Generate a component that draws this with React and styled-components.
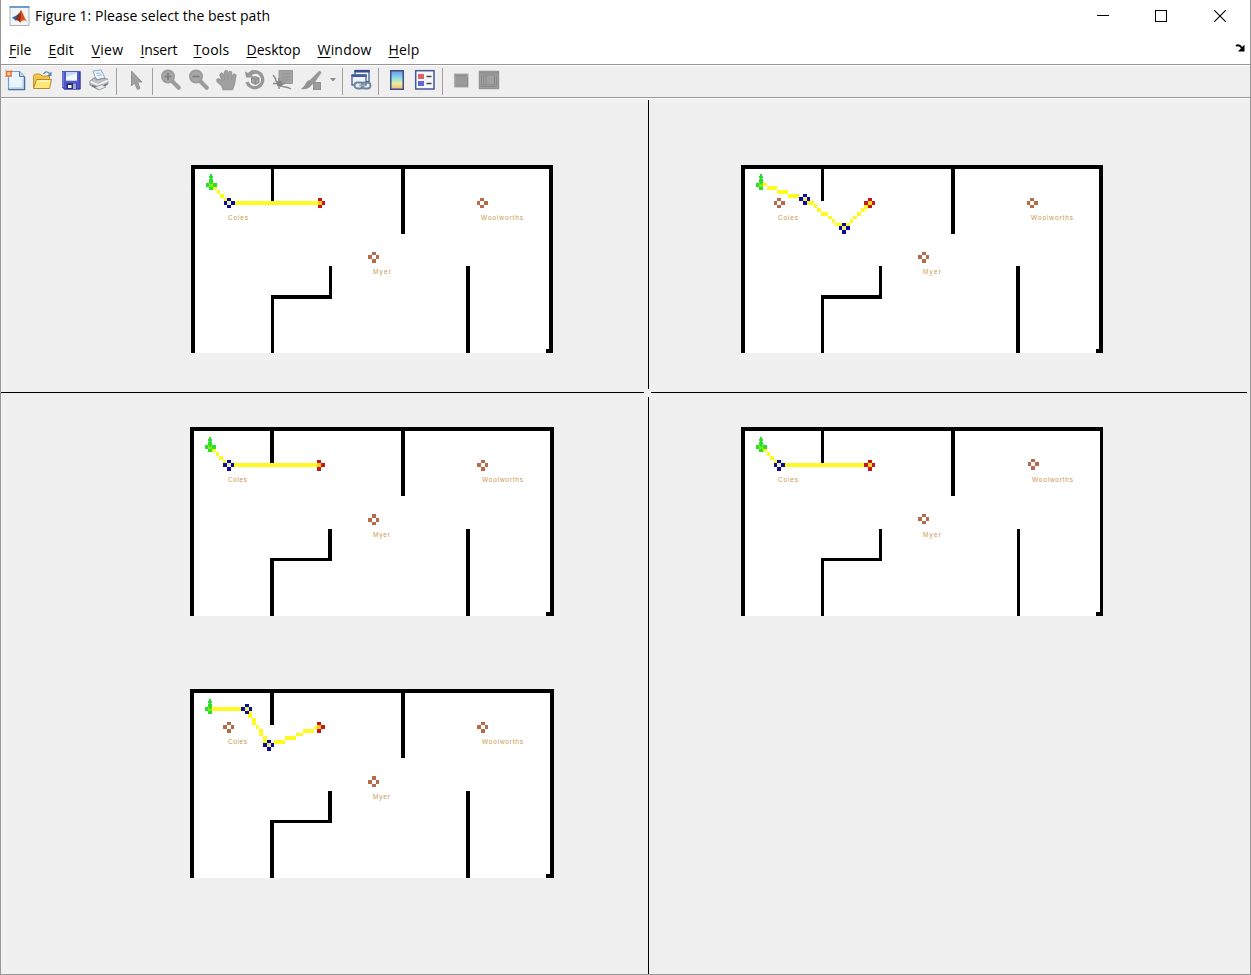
import React from 'react';
import styled, { createGlobalStyle } from 'styled-components';

const Global = createGlobalStyle`
  body { margin: 0; background: #fff; }
  * { box-sizing: border-box; }
`;

const WindowFrame = styled.div`
  width: 1251px;
  height: 975px;
  display: flex;
  flex-direction: column;
  border: 1px solid #979797;
  border-top: 0;
  background: #fff;
  color: #000;
  font-family: 'Open Sans', 'Noto Sans', sans-serif;
`;

const TitleBar = styled.header`
  height: 32px;
  display: flex;
  align-items: center;
  padding: 0 1px 0 8px;
`;

const Title = styled.h1`
  margin: 0 auto 0 5px;
  font-size: 14px;
  line-height: 32px;
  font-weight: 400;
  letter-spacing: 0.05px;
  white-space: nowrap;
`;

const WindowButtons = styled.div`
  display: flex;
  align-items: center;
  height: 30px;
`;

const WindowButton = styled.button`
  width: 58.5px;
  height: 30px;
  padding: 0;
  border: 0;
  background: none;
  display: flex;
  align-items: center;
  justify-content: center;
`;

const MenuBar = styled.nav`
  height: 32px;
  display: flex;
  align-items: center;
  padding: 0 4px 0 8px;
`;

const MenuItem = styled.span`
  width: ${(p) => p.$width}px;
  font-size: 14px;
  line-height: 32px;
  padding-top: 3px;
  letter-spacing: ${(p) => p.$track || 0}px;
  white-space: nowrap;
  &::first-letter {
    text-decoration: underline;
    text-underline-offset: 2px;
  }
`;

const DockButton = styled.span`
  margin-left: auto;
  display: flex;
`;

const ToolBar = styled.div`
  height: 34px;
  display: flex;
  align-items: center;
  background: #efefef;
  border-top: 1px solid #979797;
  border-bottom: 1px solid #979797;
  box-shadow: inset 0 1px #fff, 0 1px #fff;
`;

const Tool = styled.span`
  width: ${(p) => p.$width || 28}px;
  height: 24px;
  padding-bottom: 2px;
  display: flex;
  align-items: center;
  justify-content: center;
`;

const Separator = styled.span`
  width: 1px;
  height: 27px;
  background: #a0a0a0;
  margin: 0 ${(p) => p.$right}px 0 ${(p) => p.$left}px;
`;

const Canvas = styled.main`
  flex: 1;
  margin-top: 1px;
  display: grid;
  grid-template-columns: 647px 1px 1fr;
  grid-template-rows: 293px 1px 1fr;
  background: #f0f0f0;
`;

const Cell = styled.section`
  display: flex;
  flex-direction: column;
  gap: 73px;
  padding: ${(p) => p.$top}px 0 0 ${(p) => p.$left}px;
`;

const VerticalRule = styled.div`
  background: #000;
  margin: ${(p) => p.$top}px 0 ${(p) => p.$bottom}px;
`;

const HorizontalRule = styled.div`
  background: #000;
  margin: 0 ${(p) => p.$right}px 0 ${(p) => p.$left}px;
`;

const MapSvg = styled.svg`
  display: block;
  background: #fff;
  shape-rendering: crispEdges;
`;

const MapLabel = styled.text`
  font-family: 'Liberation Sans', sans-serif;
  font-size: 6.5px;
  fill: #c9994f;
`;

const BLUE = '#0b0b9c';
const RED = '#c81616';
const BROWN = '#b56b49';
const GREEN = '#26e02c';
const YELLOW = '#fffb20';

const Box = ({ b, fill }) => (
  <rect x={b[0]} y={b[1]} width={b[2] - b[0]} height={b[3] - b[1]} fill={fill} />
);

function Marker({ x, y, c = '344', r = '344', color, center, hide = '' }) {
  const [c0, c1, c2] = [...c].map(Number);
  const [r0, r1, r2] = [...r].map(Number);
  return (
    <g fill={color}>
      {center && <rect x={x + c0} y={y + r0} width={c1} height={r1} fill={center} />}
      <rect x={x + c0} y={y} width={c1} height={r0} />
      {!hide.includes('l') && <rect x={x} y={y + r0} width={c0} height={r1} />}
      {!hide.includes('r') && <rect x={x + c0 + c1} y={y + r0} width={c2} height={r1} />}
      <rect x={x + c0} y={y + r0 + r1} width={c1} height={r2} />
    </g>
  );
}

function Start({ x, y, r, hide }) {
  return (
    <g fill={GREEN}>
      <Marker x={x} y={y} r={r} color={GREEN} center="#8fe814" hide={hide} />
      <rect x={x + 4} y={y - 5} width={2} height={10} />
      <rect x={x + 3} y={y - 3} width={4} height={2} />
    </g>
  );
}

function FloorMap({ w, h, walls, path, start, markers, labels }) {
  return (
    <MapSvg width={w} height={h} viewBox={`0 0 ${w} ${h}`}>
      {walls.map((b, i) => <Box key={i} b={b} fill="#000" />)}
      {path.map((b, i) => <Box key={i} b={b} fill={YELLOW} />)}
      {markers.map((m, i) => <Marker key={i} {...m} />)}
      <Start {...start} />
      {labels.map(([t, x, y, len]) => (
        <MapLabel key={t} x={x} y={y + 0.5} textLength={len}>{t}</MapLabel>
      ))}
    </MapSvg>
  );
}

const wallsUpper = [
  [0, 0, 362, 4], [0, 0, 4, 188], [358, 0, 362, 188], [355, 184, 362, 188],
  [80, 0, 83, 36], [210, 0, 214, 69], [138, 101, 141, 134], [80, 130, 141, 134],
  [80, 130, 83, 188], [275, 101, 279, 188],
];
const wallsLower = [
  [0, 0, 364, 4], [0, 0, 4, 189], [360, 0, 364, 189], [356, 185, 364, 189],
  [80, 0, 84, 36], [211, 0, 215, 69], [138, 102, 142, 134], [80, 131, 142, 134],
  [80, 131, 84, 189], [276, 102, 280, 189],
];
const wallsRight = [
  [0, 0, 362, 4], [0, 0, 4, 189], [359, 0, 362, 189], [355, 185, 362, 189],
  [80, 0, 83, 36], [210, 0, 214, 69], [138, 102, 141, 134], [80, 131, 141, 134],
  [80, 131, 83, 189], [276, 102, 279, 189],
];
const diagonal = [[22, 21, 26, 25], [26, 25, 29, 29], [29, 29, 33, 33], [33, 33, 36, 36]];
const upperLabels = [['Coles', 37, 54, 20], ['Myer', 182, 108, 18], ['Woolworths', 290, 54, 42]];
const lowerLabels = [['Coles', 38, 54, 19], ['Myer', 183, 109, 17], ['Woolworths', 292, 54, 41]];
const upperShops = [
  { x: 177, y: 87, c: '443', color: BROWN },
  { x: 286, y: 33, r: '343', color: BROWN },
];
const lowerShops = [
  { x: 178, y: 87, c: '443', r: '443', color: BROWN },
  { x: 287, y: 33, c: '443', color: BROWN },
];

const plots = {
  one: {
    w: 362, h: 188, walls: wallsUpper, labels: upperLabels,
    path: [...diagonal, [44, 36, 130, 40]],
    start: { x: 15, y: 14, r: '443' },
    markers: [
      ...upperShops,
      { x: 33, y: 33, r: '343', color: BLUE, center: '#f2efb0' },
      { x: 123, y: 33, c: '443', r: '343', color: RED, center: '#f7c91c', hide: 'l' },
    ],
  },
  two: {
    w: 362, h: 188, walls: wallsUpper, labels: upperLabels,
    path: [
      [22, 18, 26, 21], [26, 21, 36, 25], [36, 25, 47, 29], [47, 29, 58, 33],
      [66, 36, 73, 40], [73, 39, 76, 43], [76, 43, 80, 47], [80, 47, 87, 51], [87, 51, 91, 54],
      [91, 54, 94, 58], [94, 58, 101, 61], [105, 58, 109, 61], [109, 54, 112, 58],
      [112, 51, 116, 54], [116, 47, 120, 51], [120, 43, 124, 47], [123, 40, 127, 44],
    ],
    start: { x: 15, y: 14, r: '443', hide: 'r' },
    markers: [
      ...upperShops,
      { x: 33, y: 33, r: '343', color: BROWN },
      { x: 58, y: 29, c: '443', color: BLUE, center: '#eeee70' },
      { x: 98, y: 58, color: BLUE, center: '#eeee70' },
      { x: 123, y: 33, c: '443', r: '343', color: RED, center: '#f7dc1c' },
    ],
  },
  three: {
    w: 364, h: 189, walls: wallsLower, labels: lowerLabels,
    path: [...diagonal, [44, 36, 131, 40]],
    start: { x: 15, y: 15, r: '343' },
    markers: [
      ...lowerShops,
      { x: 33, y: 33, c: '443', color: BLUE, center: '#f2efb0' },
      { x: 123, y: 33, c: '444', color: RED, center: '#f7c91c', hide: 'l' },
    ],
  },
  four: {
    w: 362, h: 189, walls: wallsRight,
    labels: [['Coles', 37, 54, 20], ['Myer', 182, 109, 18], ['Woolworths', 291, 54, 41]],
    path: [...diagonal, [44, 36, 123, 40]],
    start: { x: 15, y: 15, r: '343' },
    markers: [
      { x: 177, y: 87, c: '443', r: '343', color: BROWN },
      { x: 287, y: 32, c: '344', color: BROWN },
      { x: 33, y: 33, color: BLUE, center: '#f2efb0' },
      { x: 123, y: 33, c: '443', color: RED, center: '#f7dc1c' },
    ],
  },
  five: {
    w: 364, h: 189, walls: wallsLower, labels: lowerLabels,
    path: [
      [22, 18, 51, 22], [58, 22, 62, 29], [62, 29, 66, 36], [66, 36, 69, 40], [69, 40, 73, 47],
      [73, 47, 77, 54], [84, 51, 95, 55], [95, 47, 106, 51], [106, 44, 113, 47],
      [113, 40, 124, 44], [124, 37, 128, 40],
    ],
    start: { x: 15, y: 15, r: '343', hide: 'r' },
    markers: [
      ...lowerShops,
      { x: 33, y: 33, c: '443', color: BROWN },
      { x: 51, y: 15, c: '443', r: '343', color: BLUE, center: '#eeee70' },
      { x: 73, y: 51, c: '443', color: BLUE, center: '#eeee70' },
      { x: 123, y: 33, c: '444', color: RED, center: '#f7c91c', hide: 'l' },
    ],
  },
};

const Icon = ({ w = 22, h = 22, children }) => (
  <svg width={w} height={h} viewBox={`0 0 ${w} ${h}`} fill="none">{children}</svg>
);

const AppIcon = () => (
  <Icon w={21} h={20}>
    <rect x="1" y="0.5" width="19" height="19" fill="#f4f4f4" stroke="#aeb2b8" />
    <rect x="0.5" y="0" width="20" height="2" fill="#6a9dcc" />
    <path d="M3 11.5L7.5 9.5L10 12L6.5 14.5Z" fill="#2f67a8" />
    <path d="M7.5 9.5Q10.5 8 12 4L11 12L9 14L6.5 14.5Z" fill="#6a3a3c" />
    <path d="M12 4C14 6 15 12 18 15.5C15 13.5 13.5 13.5 11 17C10 14.5 9 14 7.5 14.5C10 12 11 9 12 4Z" fill="#d95319" />
    <path d="M12 5C11.8 9 12 12 10.5 16C9.5 14.5 9 14 8 14.3C10.5 11 11 9 12 5Z" fill="#8f2518" />
  </Icon>
);

const NewIcon = () => (
  <Icon>
    <path d="M6 2.5H15.5L20.5 7.5V20.5H4.5V4Z" fill="#eaf5ff" stroke="#7f9ac6" strokeWidth="1.2" />
    <path d="M15.5 2.5V7.5H20.5" fill="#bcd6f1" stroke="#5375ad" />
    <path d="M4.5 20.5H20.5V8" stroke="#4d6b9f" strokeWidth="1.4" />
    <path d="M6 19H19V10" stroke="#b7d4ef" strokeWidth="1.6" />
    <path d="M1 1L8 8M8 1L1 8" stroke="#e79b78" />
    <rect x="2.5" y="2.5" width="4.5" height="4.5" fill="#ffd68f" stroke="#e36838" strokeWidth="1.4" />
  </Icon>
);
const OpenIcon = () => (
  <Icon>
    <path d="M1.5 19V6.5L3 5H8L10 7H17.5V11" fill="#f2c64c" stroke="#c29a3a" />
    <path d="M1.5 19.5L4.5 10.5H19.5L17.5 19.5Z" fill="#ffe678" stroke="#b8892b" />
    <path d="M5.5 12H18" stroke="#fff6c4" strokeWidth="1.5" />
    <path d="M11.5 5Q14 1 17.5 4.5" stroke="#5e85a1" strokeWidth="1.4" />
    <path d="M19.5 2.5V7H15Z" fill="#5e85a1" />
  </Icon>
);
const SaveIcon = () => (
  <Icon>
    <path d="M2 2H20.5V20.5H4L2 18.5Z" fill="#5156c9" />
    <path d="M20 2.5V20H4" stroke="#343397" />
    <path d="M3 3V18" stroke="#898ee8" />
    <rect x="6" y="3" width="11" height="8.5" fill="#c4dbf5" />
    <path d="M6 8L17 4V11.5H6Z" fill="#f2f8ff" />
    <rect x="6.5" y="14" width="10" height="6" fill="#2c2f78" />
    <rect x="8" y="16" width="3.5" height="3" fill="#eef3ff" />
    <rect x="13" y="14.5" width="3" height="5.5" fill="#9aa5d8" />
  </Icon>
);
const PrintIcon = () => (
  <Icon>
    <path d="M5 2L13 1L17 9L8 11Z" fill="#eaf4ff" stroke="#8fa5c2" />
    <path d="M8 4.5L12.5 4M9 6.5L14 6" stroke="#9ebce2" />
    <path d="M2 12L6 9H8L8.5 11L15 9.5L19.5 10L20 15L10 20.5L2 16Z" fill="#bfc0c3" stroke="#8b8d93" />
    <path d="M2.5 12.5L10 16L20 11.5" stroke="#f7f7f7" strokeWidth="1.5" />
    <path d="M4 16.5L11 19L19 15" stroke="#74767d" strokeWidth="1.8" />
    <path d="M7 18L14 15.5L18 18L11 21Z" fill="#e6e7e9" stroke="#85878c" strokeWidth=".7" />
  </Icon>
);
const PointerIcon = () => (
  <Icon>
    <path d="M5.5 2V17L8.5 14L11.5 20.5L14 19.2L11.5 13H16Z" fill="#a0a0a0" stroke="#929292" />
  </Icon>
);
const ZoomIcon = ({ plus }) => (
  <Icon>
    <path d="M12.5 12.5L18.7 18.7" stroke="#9c9c9c" strokeWidth="4.2" strokeLinecap="round" />
    <circle cx="8" cy="7.5" r="6.2" fill="#a6a6a6" stroke="#999" strokeWidth="1.6" />
    <path d={plus ? 'M4.5 7.5H11.5M8 4V11' : 'M4.5 7.5H11.5'} stroke="#7b7b7b" strokeWidth="1.7" />
  </Icon>
);
const HandIcon = () => (
  <Icon>
    <path d="M7 20.5L6 17L1 12.5V10.5L3 10L6 12L4 6L5.5 4L7 5L8.5 8L8.5 3L10 1.5L11.5 2L12 7L13.5 2.5L15.5 3L16 8L18 5L20 6L18.5 15L16.5 20.5Z" fill="#a0a0a0" stroke="#999" strokeWidth="1.3" strokeLinejoin="round" />
    <path d="M8.5 7V11M12 7V11M15.5 8V11" stroke="#929292" strokeWidth=".8" />
  </Icon>
);
const RotateIcon = () => (
  <Icon>
    <path d="M3 13A8 8 0 1 0 7 3.6" stroke="#979797" strokeWidth="3.3" />
    <path d="M1 2.5L2 8.5H10L7.5 6L12 4.5L8 1L4 4Z" fill="#979797" />
    <path d="M7.5 9L11 7.5L15 9V13.5L11.5 15.5L7.5 13.5Z" fill="#a2a2a2" stroke="#8a8a8a" />
    <path d="M7.5 9L11.5 10.5L15 9M11.5 10.5V15.5" stroke="#8a8a8a" />
  </Icon>
);
const DataTipIcon = () => (
  <Icon>
    <path d="M7 1.5H20.5V14.5H12L8 18V14.5H7Z" fill="#a2a2a2" stroke="#999" />
    <path d="M10 5H18M10 8H18M10 11H18" stroke="#959595" />
    <path d="M1 6Q4 9 4 12Q9 18 13 18Q16 18 19 20M7 9V20M1 14.5H13" stroke="#8a8a8a" strokeWidth="1.4" />
    <rect x="5" y="12" width="5" height="5" fill="#858585" />
  </Icon>
);
const BrushIcon = () => (
  <Icon>
    <path d="M19.5 2L21 3.5L14 14L10.5 11Z" fill="#959595" stroke="#999" />
    <path d="M10.5 11L13.5 14L10 18Q6 21 1 20Q5 17 6.5 13Q8 11 10.5 11Z" fill="#939393" />
    <rect x="13.5" y="13.5" width="7" height="7" fill="#9c9c9c" stroke="#919191" />
  </Icon>
);
const LinkIcon = () => (
  <Icon>
    <rect x="5" y="1.5" width="14" height="11" fill="#f0f5ff" stroke="#344d91" strokeWidth="1.2" />
    <rect x="4.5" y="1" width="15" height="2.5" fill="#344d91" />
    <rect x="2" y="6" width="14" height="10" fill="#edf4ff" stroke="#344d91" strokeWidth="1.2" />
    <rect x="1.5" y="5.5" width="15" height="2.5" fill="#425ca1" />
    <rect x="4.5" y="13.5" width="9" height="6" rx="3" fill="#e7eef5" stroke="#6d8498" strokeWidth="1.8" />
    <rect x="11.5" y="13.5" width="9" height="6" rx="3" stroke="#6d8498" strokeWidth="1.8" />
    <path d="M9 16.5H16" stroke="#9cb0c2" strokeWidth="1.8" />
  </Icon>
);
const ColorbarIcon = () => (
  <Icon>
    <defs>
      <linearGradient id="colorbar" x2="0" y2="1">
        <stop stopColor="#748bea" /><stop offset=".35" stopColor="#83d8ed" />
        <stop offset=".68" stopColor="#e9eea0" /><stop offset="1" stopColor="#ffb27a" />
      </linearGradient>
    </defs>
    <rect x="4.75" y="1.75" width="12.5" height="18.5" fill="url(#colorbar)" stroke="#3b5087" strokeWidth="1.5" />
  </Icon>
);
const LegendIcon = () => (
  <Icon>
    <rect x="1.7" y="1.7" width="18.3" height="18.3" fill="#f6f8ff" stroke="#475a96" strokeWidth="1.5" />
    <rect x="4" y="5" width="6" height="5" fill="#e46060" />
    <rect x="4" y="12" width="6" height="5" fill="#6464dc" />
    <path d="M12.5 7.5H17.5M12.5 14.5H17.5" stroke="#444" strokeWidth="1.5" />
  </Icon>
);
const HideToolsIcon = () => (
  <Icon>
    <rect x="4.75" y="5.25" width="13" height="12.5" fill="#9a9a9a" stroke="#a9a9a9" strokeWidth="1.5" />
    <path d="M5 6.5H17" stroke="#8c8c8c" strokeWidth="1.6" />
    <path d="M6 17H17.5V8" stroke="#8c8c8c" />
  </Icon>
);
const ShowToolsIcon = () => (
  <Icon>
    <rect x="1.5" y="2.5" width="19" height="17" fill="#a1a1a1" stroke="#929292" strokeWidth="1.4" />
    <path d="M2 4H20" stroke="#909090" strokeWidth="1.6" />
    <rect x="5.5" y="6" width="11" height="10" fill="#a0a0a0" stroke="#898989" />
    <path d="M3.5 6V18M18.5 6V18M3 17.5H19M8 6V16" stroke="#8c8c8c" />
  </Icon>
);

const menus = [
  ['File', 39.5, 0.1], ['Edit', 43, 0.1], ['View', 49, 0.3], ['Insert', 53, -0.15],
  ['Tools', 53, 0.25], ['Desktop', 71, 0], ['Window', 71, 0.2], ['Help', 40, 0.2],
];

export default function App() {
  return (
    <>
      <Global />
      <WindowFrame>
        <TitleBar>
          <AppIcon />
          <Title>Figure 1: Please select the best path</Title>
          <WindowButtons>
            <WindowButton aria-label="Minimize">
              <Icon w={12} h={12}><path d="M0 5.5H12" stroke="#000" /></Icon>
            </WindowButton>
            <WindowButton aria-label="Maximize">
              <Icon w={12} h={12}><rect x=".5" y=".5" width="11" height="11" stroke="#000" /></Icon>
            </WindowButton>
            <WindowButton aria-label="Close">
              <Icon w={12} h={12}><path d="M0 0L12 12M12 0L0 12" stroke="#000" strokeWidth="1.1" /></Icon>
            </WindowButton>
          </WindowButtons>
        </TitleBar>
        <MenuBar>
          {menus.map(([name, width, track]) => (
            <MenuItem key={name} $width={width} $track={track}>{name}</MenuItem>
          ))}
          <DockButton>
            <Icon w={11} h={8}>
              <path d="M1 2Q4 0 7 4" stroke="#000" strokeWidth="2" />
              <path d="M9.5 0.5V7.5H3Z" fill="#000" />
            </Icon>
          </DockButton>
        </MenuBar>
        <ToolBar>
          <Tool><NewIcon /></Tool>
          <Tool><OpenIcon /></Tool>
          <Tool><SaveIcon /></Tool>
          <Tool><PrintIcon /></Tool>
          <Separator $left={3} $right={6} />
          <Tool><PointerIcon /></Tool>
          <Separator $left={1} $right={4} />
          <Tool><ZoomIcon plus /></Tool>
          <Tool><ZoomIcon /></Tool>
          <Tool><HandIcon /></Tool>
          <Tool><RotateIcon /></Tool>
          <Tool><DataTipIcon /></Tool>
          <Tool><BrushIcon /></Tool>
          <Tool $width={16}>
            <Icon w={6} h={4}><path d="M0 0H6L3 3.5Z" fill="#8c8c8c" /></Icon>
          </Tool>
          <Separator $left={1} $right={4} />
          <Tool><LinkIcon /></Tool>
          <Separator $left={3} $right={4} />
          <Tool><ColorbarIcon /></Tool>
          <Tool><LegendIcon /></Tool>
          <Separator $left={3} $right={4} />
          <Tool><HideToolsIcon /></Tool>
          <Tool><ShowToolsIcon /></Tool>
        </ToolBar>
        <Canvas>
          <Cell $top={66} $left={190}><FloorMap {...plots.one} /></Cell>
          <VerticalRule $top={1} $bottom={3} />
          <Cell $top={66} $left={92}><FloorMap {...plots.two} /></Cell>
          <HorizontalRule $left={0} $right={4} />
          <span />
          <HorizontalRule $left={2} $right={3} />
          <Cell $top={34} $left={189}>
            <FloorMap {...plots.three} />
            <FloorMap {...plots.five} />
          </Cell>
          <VerticalRule $top={4} $bottom={0} />
          <Cell $top={34} $left={92}><FloorMap {...plots.four} /></Cell>
        </Canvas>
      </WindowFrame>
    </>
  );
}
